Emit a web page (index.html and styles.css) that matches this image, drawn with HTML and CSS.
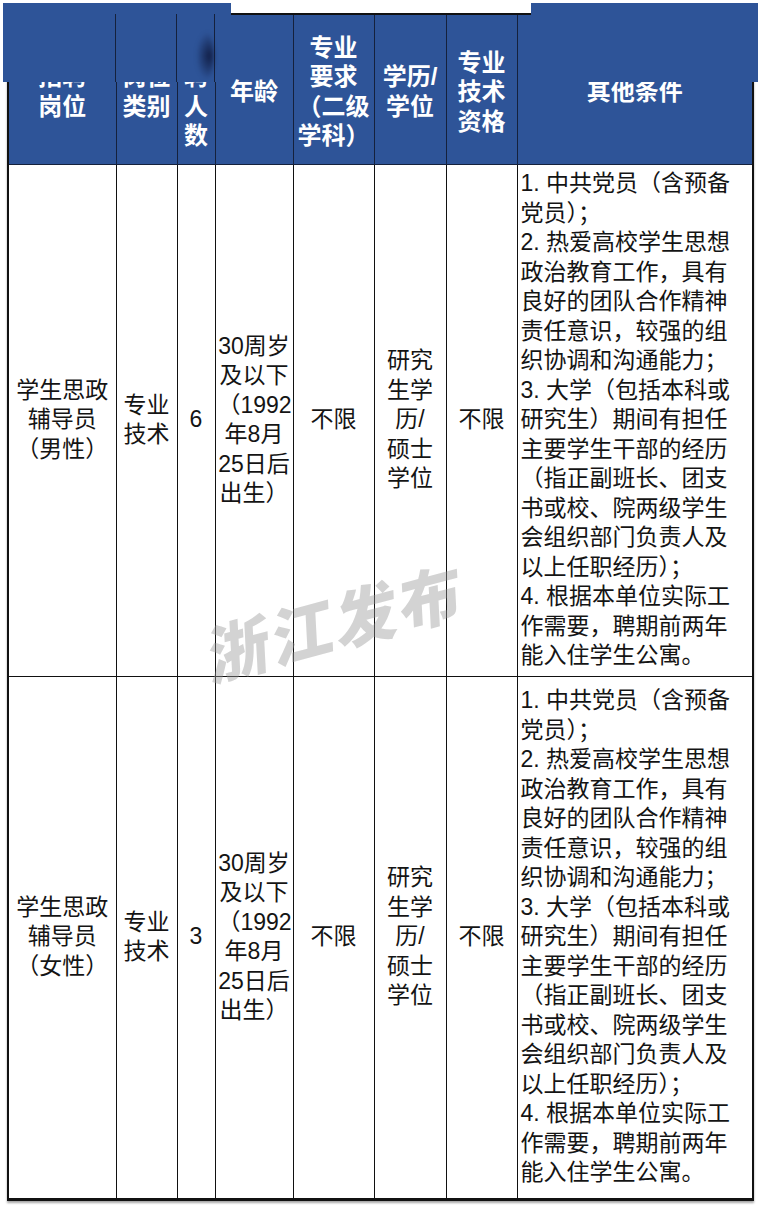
FILE: index.html
```html
<!DOCTYPE html>
<html lang="zh-CN">
<head>
<meta charset="utf-8">
<title>招聘岗位</title>
<link rel="stylesheet" href="styles.css">
</head>
<body>
<div class="page">
  <table class="grid">
    <colgroup>
      <col class="c1"><col class="c2"><col class="c3"><col class="c4">
      <col class="c5"><col class="c6"><col class="c7"><col class="c8">
    </colgroup>
    <thead>
      <tr class="head">
        <th>招聘<br>岗位</th>
        <th>岗位<br>类别</th>
        <th>招<br>聘<br>人<br>数</th>
        <th>年龄</th>
        <th>专业<br>要求<br>（二级<br>学科）</th>
        <th>学历/<br>学位</th>
        <th>专业<br>技术<br>资格</th>
        <th>其他条件</th>
      </tr>
    </thead>
    <tbody>
      <tr class="row-a">
        <td>学生思政<br>辅导员<br>（男性）</td>
        <td>专业<br>技术</td>
        <td>6</td>
        <td>30周岁<br>及以下<br>（1992<br>年8月<br>25日后<br>出生）</td>
        <td>不限</td>
        <td>研究<br>生学<br>历/<br>硕士<br>学位</td>
        <td>不限</td>
        <td class="cond">1. 中共党员（含预备<br>党员）；<br>2. 热爱高校学生思想<br>政治教育工作，具有<br>良好的团队合作精神<br>责任意识，较强的组<br>织协调和沟通能力；<br>3. 大学（包括本科或<br>研究生）期间有担任<br>主要学生干部的经历<br>（指正副班长、团支<br>书或校、院两级学生<br>会组织部门负责人及<br>以上任职经历）；<br>4. 根据本单位实际工<br>作需要，聘期前两年<br>能入住学生公寓。</td>
      </tr>
      <tr class="row-b">
        <td>学生思政<br>辅导员<br>（女性）</td>
        <td>专业<br>技术</td>
        <td>3</td>
        <td>30周岁<br>及以下<br>（1992<br>年8月<br>25日后<br>出生）</td>
        <td>不限</td>
        <td>研究<br>生学<br>历/<br>硕士<br>学位</td>
        <td>不限</td>
        <td class="cond">1. 中共党员（含预备<br>党员）；<br>2. 热爱高校学生思想<br>政治教育工作，具有<br>良好的团队合作精神<br>责任意识，较强的组<br>织协调和沟通能力；<br>3. 大学（包括本科或<br>研究生）期间有担任<br>主要学生干部的经历<br>（指正副班长、团支<br>书或校、院两级学生<br>会组织部门负责人及<br>以上任职经历）；<br>4. 根据本单位实际工<br>作需要，聘期前两年<br>能入住学生公寓。</td>
      </tr>
    </tbody>
  </table>
  <div class="mask mask-left">
    <i class="vl vl-a"></i><i class="vl vl-b"></i><i class="vl vl-c"></i>
    <i class="blob"></i>
  </div>
  <div class="mask mask-right"></div>
  <div class="watermark">浙江发布</div>
</div>
</body>
</html>
```
FILE: styles.css
```css
html, body {
  margin: 0;
  padding: 0;
  background: #fff;
}

.page {
  position: relative;
  width: 762px;
  height: 1218px;
  box-sizing: border-box;
  padding: 13px 0 0 7px;
  overflow: hidden;
}

.grid {
  border-collapse: collapse;
  table-layout: fixed;
  width: 746px;
  border: 2px solid #111;
  border-bottom-width: 3px;
  box-shadow: 0 2px 2px rgba(0, 0, 0, 0.35);
  font-family: "Liberation Sans", "Noto Sans CJK SC", sans-serif;
}

.c1 { width: 108px; }
.c2 { width: 61px; }
.c3 { width: 38px; }
.c4 { width: 78px; }
.c5 { width: 81px; }
.c6 { width: 72px; }
.c7 { width: 71px; }
.c8 { width: 236px; }

.head th {
  height: 150px;
  box-sizing: border-box;
  background: #2e5498;
  color: #fff;
  font-family: "Liberation Sans", "Noto Sans CJK SC", sans-serif;
  font-weight: 700;
  font-size: 24px;
  line-height: 29.5px;
  border: 1px solid #15213c;
  padding: 5px 0 0;
  text-align: center;
  vertical-align: middle;
}

td {
  border: 1px solid #111;
  padding: 0 2px;
  text-align: center;
  vertical-align: middle;
  font-size: 23px;
  line-height: 29.5px;
  color: #141414;
  white-space: nowrap;
}

.row-a td { height: 511px; }
.row-b td { height: 521px; }

td.cond {
  text-align: left;
  padding: 0 3px;
}

.mask {
  position: absolute;
  top: 3px;
  height: 79px;
  background: #2e5498;
}

.mask-left {
  left: 3px;
  width: 228px;
}

.mask-right {
  left: 531px;
  width: 227px;
}

.vl {
  position: absolute;
  top: 11px;
  bottom: 0;
  width: 1px;
  background: #15213c;
}

.vl-a { left: 112px; }
.vl-b { left: 173px; }
.vl-c { left: 211px; }

.blob {
  position: absolute;
  left: 193px;
  top: 28px;
  width: 18px;
  height: 50px;
  border-radius: 50%;
  background: radial-gradient(ellipse at 75% 50%, rgba(14, 24, 60, 0.9), rgba(14, 24, 60, 0) 70%);
  filter: blur(2px);
}

.watermark {
  position: absolute;
  left: 204px;
  top: 588px;
  font-family: "Noto Sans CJK SC", sans-serif;
  font-weight: 900;
  font-size: 63px;
  line-height: 1;
  letter-spacing: 3px;
  color: rgba(150, 150, 150, 0.42);
  transform: rotate(-15deg) skewX(-12deg);
  transform-origin: 50% 50%;
  pointer-events: none;
}
```
